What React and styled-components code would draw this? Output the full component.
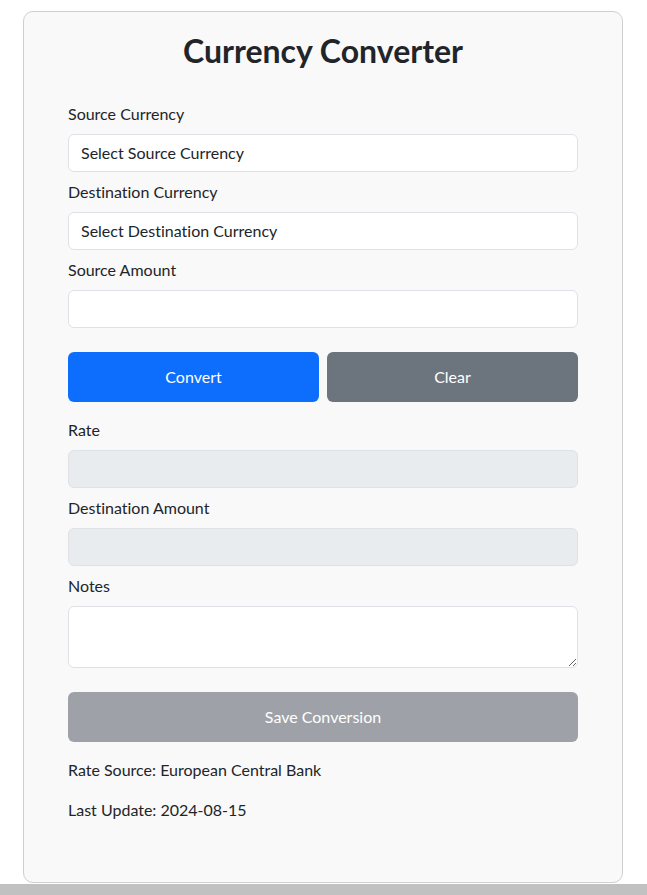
import React, { useState } from 'react';
import styled, { createGlobalStyle } from 'styled-components';

const GlobalStyle = createGlobalStyle`
  * { box-sizing: border-box; }
  body {
    margin: 0;
    background: #ffffff;
    font-family: Lato, "Noto Sans", sans-serif;
    font-size: 16px;
    line-height: 1.5;
    color: #212529;
    font-variant-ligatures: none;
  }
`;

const Page = styled.div`
  display: flex;
  flex-direction: column;
`;

const CardWrap = styled.div`
  padding: 11px 0 0 23px;
`;

const Card = styled.div`
  width: 600px;
  background: #f9f9f9;
  border: 1px solid #cfcfcf;
  border-radius: 10px;
  padding: 20px 44px 44px;
`;

const Title = styled.h1`
  margin: 0 0 32px;
  text-align: center;
  font-size: 32px;
  line-height: 38px;
  font-weight: 700;
  color: #212529;
`;

const Group = styled.div`
  margin-bottom: ${p => p.$mb ?? 8}px;
`;

const Label = styled.label`
  display: block;
  margin-bottom: 8px;
  font-size: 16px;
  line-height: 24px;
`;

const Field = styled.input`
  display: block;
  width: 100%;
  height: 38px;
  padding: 6px 12px;
  font: inherit;
  color: #212529;
  background: ${p => (p.disabled ? '#e9ecef' : '#ffffff')};
  border: 1px solid #dee2e6;
  border-radius: 6px;
  outline: none;
`;

const Select = styled.select`
  display: block;
  width: 100%;
  height: 38px;
  padding: 6px 12px;
  font: inherit;
  color: #212529;
  background: #ffffff;
  border: 1px solid #dee2e6;
  border-radius: 6px;
  appearance: none;
  outline: none;
`;

const Notes = styled.textarea`
  display: block;
  width: 100%;
  height: 62px;
  padding: 6px 12px;
  font: inherit;
  color: #212529;
  background: #ffffff;
  border: 1px solid #dee2e6;
  border-radius: 6px;
  outline: none;
`;

const ButtonRow = styled.div`
  display: grid;
  grid-template-columns: 1fr 1fr;
  gap: 8px;
  margin: 24px 0 16px;
`;

const Button = styled.button`
  display: block;
  width: 100%;
  height: 50px;
  font: inherit;
  font-size: 16px;
  color: #ffffff;
  border: none;
  border-radius: 6px;
  cursor: pointer;
  background: ${p => p.$bg};
  &:disabled { cursor: default; }
`;

const Info = styled.p`
  margin: ${p => p.$mt ?? 0}px 0 16px;
  font-size: 16px;
  line-height: 24px;
`;

const BottomBar = styled.div`
  width: 100%;
  height: 12px;
  margin-top: 1px;
  background: #c1c1c1;
`;

export default function App() {
  const [source, setSource] = useState('');
  const [dest, setDest] = useState('');
  const [amount, setAmount] = useState('');
  const [notes, setNotes] = useState('');

  const clear = () => {
    setSource('');
    setDest('');
    setAmount('');
    setNotes('');
  };

  return (
    <>
      <GlobalStyle />
      <Page>
        <CardWrap>
          <Card>
            <Title>Currency Converter</Title>
            <Group>
              <Label>Source Currency</Label>
              <Select value={source} onChange={e => setSource(e.target.value)}>
                <option value="">Select Source Currency</option>
                <option value="USD">USD</option>
                <option value="EUR">EUR</option>
              </Select>
            </Group>
            <Group>
              <Label>Destination Currency</Label>
              <Select value={dest} onChange={e => setDest(e.target.value)}>
                <option value="">Select Destination Currency</option>
                <option value="USD">USD</option>
                <option value="EUR">EUR</option>
              </Select>
            </Group>
            <Group $mb={0}>
              <Label>Source Amount</Label>
              <Field type="number" value={amount} onChange={e => setAmount(e.target.value)} />
            </Group>
            <ButtonRow>
              <Button $bg="#0d6efd">Convert</Button>
              <Button $bg="#6c757d" onClick={clear}>Clear</Button>
            </ButtonRow>
            <Group>
              <Label>Rate</Label>
              <Field disabled />
            </Group>
            <Group>
              <Label>Destination Amount</Label>
              <Field disabled />
            </Group>
            <Group $mb={24}>
              <Label>Notes</Label>
              <Notes value={notes} onChange={e => setNotes(e.target.value)} />
            </Group>
            <Button $bg="#9ea2a8" disabled>Save Conversion</Button>
            <Info $mt={16}>Rate Source: European Central Bank</Info>
            <Info>Last Update: 2024-08-15</Info>
          </Card>
        </CardWrap>
        <BottomBar />
      </Page>
    </>
  );
}
